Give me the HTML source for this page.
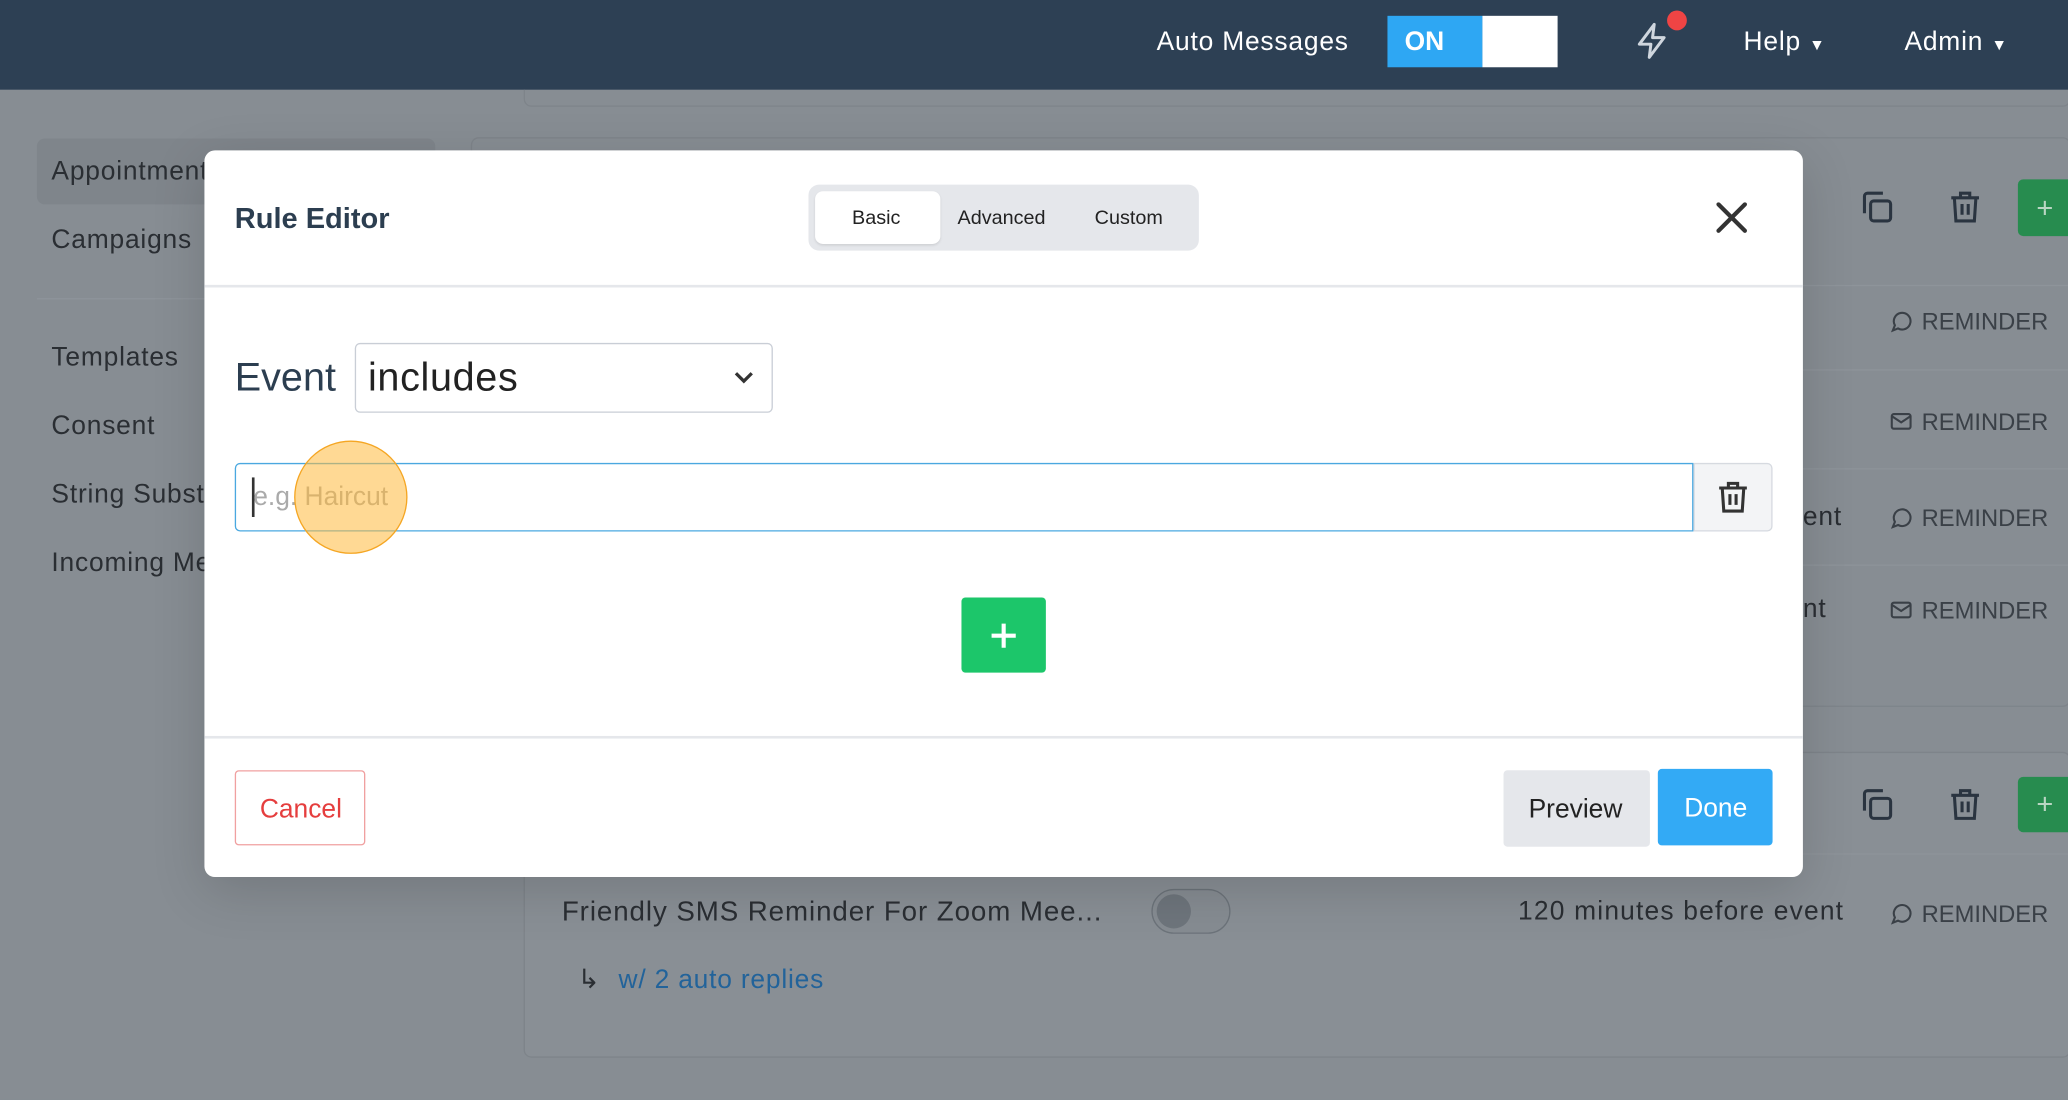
<!DOCTYPE html>
<html><head><meta charset="utf-8"><style>
html,body{margin:0;padding:0;width:2068px;height:1100px;overflow:hidden;background:#878d93;font-family:"Liberation Sans",sans-serif}
#w{position:absolute;left:0;top:0;width:1568px;height:834px;transform:scale(1.31888);transform-origin:0 0;background:#878d93}
.a{position:absolute;white-space:nowrap}
.t{letter-spacing:.6px}
.nav{left:0;top:0;width:1568px;height:68px;background:#2d4054}
.sb{font-size:20px;color:#2a2e33;left:39px;letter-spacing:.6px}
.rem{font-size:18px;color:#3a4047;left:1432px}
.rem svg{vertical-align:-3px;margin-right:6px}
.hl{background:#8e949a;height:1px}
</style></head><body><div id="w">
<div class="a nav"></div>
<div class="a t" style="left:877px;top:21px;font-size:20px;color:#fff">Auto Messages</div>
<div class="a" style="left:1052px;top:12px;width:72px;height:39px;background:#2ea7f3"></div>
<div class="a" style="left:1065px;top:21px;font-size:20px;font-weight:bold;color:#fff">ON</div>
<div class="a" style="left:1124px;top:12px;width:57px;height:39px;background:#fff"></div>
<svg class="a" style="left:1238px;top:16px" width="30" height="30" viewBox="0 0 24 24" fill="none" stroke="#cfd6de" stroke-width="1.8" stroke-linejoin="round"><path d="M13 2L4 14h7l-1 8 9-12h-7z"/></svg>
<div class="a" style="left:1264px;top:8px;width:15px;height:15px;border-radius:50%;background:#ef4444"></div>
<div class="a t" style="left:1322px;top:21px;font-size:20px;color:#fff">Help <span style="font-size:12px">▼</span></div>
<div class="a t" style="left:1444px;top:21px;font-size:20px;color:#fff">Admin <span style="font-size:12px">▼</span></div>

<div class="a" style="left:397px;top:68px;width:1171px;height:12px;border:1px solid #7e848a;border-top:none;border-radius:0 0 6px 6px"></div>
<div class="a" style="left:28px;top:105px;width:302px;height:50px;background:#7f858b;border-radius:6px"></div>
<div class="a sb" style="top:119px">Appointments</div>
<div class="a sb" style="top:171px">Campaigns</div>
<div class="a hl" style="left:28px;top:226px;width:130px"></div>
<div class="a sb" style="top:260px">Templates</div>
<div class="a sb" style="top:312px">Consent</div>
<div class="a sb" style="top:364px">String Substitutions</div>
<div class="a sb" style="top:416px">Incoming Messages</div>

<div class="a" style="left:357px;top:104px;width:1211px;height:430px;border:1px solid #7e848a;border-radius:6px"></div>
<div class="a hl" style="left:1367px;top:216px;width:201px"></div>
<div class="a hl" style="left:1367px;top:280px;width:201px"></div>
<div class="a hl" style="left:1367px;top:355px;width:201px"></div>
<div class="a hl" style="left:1367px;top:428px;width:201px"></div>
<div class="a" style="left:397px;top:570px;width:1171px;height:230px;border:1px solid #7e848a;border-radius:6px;background:#898f95"></div>
<div class="a hl" style="left:398px;top:647px;width:1170px"></div>

<svg class="a" style="left:1409px;top:143px" width="28" height="28" viewBox="0 0 24 24" fill="none" stroke="#2a3440" stroke-width="2"><rect x="8" y="8" width="13" height="13" rx="2"/><path d="M4 16V5a2 2 0 0 1 2-2h10"/></svg>
<svg class="a" style="left:1476px;top:143px" width="28" height="28" viewBox="0 0 24 24" fill="none" stroke="#2a3440" stroke-width="2"><path d="M3 6h18M9 6V3h6v3M5 6l1 15h12l1-15M10 10v7M14 10v7"/></svg>
<div class="a" style="left:1530px;top:136px;width:40px;height:43px;background:#278c4f;border-radius:4px 0 0 4px;color:#b9d6c3;font-size:22px;line-height:43px;padding-left:14px;box-sizing:border-box">+</div>
<svg class="a" style="left:1409px;top:596px" width="28" height="28" viewBox="0 0 24 24" fill="none" stroke="#2a3440" stroke-width="2"><rect x="8" y="8" width="13" height="13" rx="2"/><path d="M4 16V5a2 2 0 0 1 2-2h10"/></svg>
<svg class="a" style="left:1476px;top:596px" width="28" height="28" viewBox="0 0 24 24" fill="none" stroke="#2a3440" stroke-width="2"><path d="M3 6h18M9 6V3h6v3M5 6l1 15h12l1-15M10 10v7M14 10v7"/></svg>
<div class="a" style="left:1530px;top:589px;width:40px;height:42px;background:#278c4f;border-radius:4px 0 0 4px;color:#b9d6c3;font-size:22px;line-height:42px;padding-left:14px;box-sizing:border-box">+</div>

<div class="a rem" style="top:234px"><svg width="19" height="19" viewBox="0 0 24 24" fill="none" stroke="#3a4047" stroke-width="2"><path d="M4 21l2-5a8 8 0 1 1 3 3z"/></svg>REMINDER</div>
<div class="a rem" style="top:310px"><svg width="19" height="19" viewBox="0 0 24 24" fill="none" stroke="#3a4047" stroke-width="2"><rect x="3" y="5" width="18" height="14" rx="2"/><path d="M3 7l9 6 9-6"/></svg>REMINDER</div>
<div class="a rem" style="top:383px"><svg width="19" height="19" viewBox="0 0 24 24" fill="none" stroke="#3a4047" stroke-width="2"><path d="M4 21l2-5a8 8 0 1 1 3 3z"/></svg>REMINDER</div>
<div class="a rem" style="top:453px"><svg width="19" height="19" viewBox="0 0 24 24" fill="none" stroke="#3a4047" stroke-width="2"><rect x="3" y="5" width="18" height="14" rx="2"/><path d="M3 7l9 6 9-6"/></svg>REMINDER</div>
<div class="a rem" style="top:683px"><svg width="19" height="19" viewBox="0 0 24 24" fill="none" stroke="#3a4047" stroke-width="2"><path d="M4 21l2-5a8 8 0 1 1 3 3z"/></svg>REMINDER</div>
<div class="a t" style="left:1367px;top:381px;font-size:20px;color:#2a2e33">ent</div>
<div class="a t" style="left:1367px;top:451px;font-size:20px;color:#2a2e33">nt</div>

<div class="a" style="left:426px;top:680px;font-size:21px;letter-spacing:.7px;color:#2a2e33">Friendly SMS Reminder For Zoom Mee...</div>
<div class="a" style="left:873px;top:674px;width:60px;height:34px;border:1px solid #6c737a;border-radius:17px;box-sizing:border-box;background:#868c92"></div>
<div class="a" style="left:877px;top:678px;width:26px;height:26px;border-radius:50%;background:#6e757c"></div>
<div class="a" style="left:1151px;top:680px;font-size:20px;letter-spacing:.9px;color:#2a2e33">120 minutes before event</div>
<div class="a" style="left:438px;top:730px;font-size:20px;color:#2a2e33">↳</div>
<div class="a t" style="left:469px;top:732px;font-size:20px;color:#22639a">w/ 2 auto replies</div>

<!-- modal -->
<div class="a" style="left:155px;top:114px;width:1212px;height:551px;background:#fff;border-radius:8px;box-shadow:0 10px 40px rgba(0,0,0,.15)"></div>
<div class="a" style="left:178px;top:153px;font-size:22px;font-weight:bold;color:#2c3e50">Rule Editor</div>
<div class="a" style="left:613px;top:140px;width:296px;height:50px;background:#e5e7eb;border-radius:8px"></div>
<div class="a" style="left:618px;top:145px;width:95px;height:40px;background:#fff;border-radius:6px;box-shadow:0 1px 2px rgba(0,0,0,.1)"></div>
<div class="a" style="left:646px;top:157px;font-size:15px;color:#222">Basic</div>
<div class="a" style="left:726px;top:157px;font-size:15px;color:#222">Advanced</div>
<div class="a" style="left:830px;top:157px;font-size:15px;color:#222">Custom</div>
<svg class="a" style="left:1299px;top:151px" width="28" height="28" viewBox="0 0 28 28" stroke="#333" stroke-width="3.2" stroke-linecap="round"><path d="M4 4l20 20M24 4L4 24"/></svg>
<div class="a" style="left:155px;top:216px;width:1212px;height:2px;background:#e5e7eb"></div>

<div class="a" style="left:178px;top:270px;font-size:30px;color:#2c3e50">Event</div>
<div class="a" style="left:269px;top:260px;width:317px;height:53px;border:1px solid #c9ced6;border-radius:4px;box-sizing:border-box"></div>
<div class="a" style="left:279px;top:270px;font-size:30px;color:#222;letter-spacing:.5px">includes</div>
<svg class="a" style="left:556px;top:279px" width="16" height="14" viewBox="0 0 16 14" fill="none" stroke="#333" stroke-width="2.5"><path d="M2 4l6 6 6-6"/></svg>

<div class="a" style="left:178px;top:351px;width:1106px;height:52px;border:1.5px solid #4aa8e0;border-radius:4px 0 0 4px;box-sizing:border-box"></div>
<div class="a" style="left:191px;top:362px;width:1.5px;height:30px;background:#333"></div>
<div class="a" style="left:192px;top:366px;font-size:20px;color:#aaa">e.g. Haircut</div>
<div class="a" style="left:1284px;top:351px;width:60px;height:52px;background:#f3f4f6;border:1px solid #d6dae0;border-radius:0 4px 4px 0;box-sizing:border-box"></div>
<svg class="a" style="left:1300px;top:362px" width="28" height="30" viewBox="0 0 24 24" fill="none" stroke="#333" stroke-width="2"><path d="M3 6h18M9 6V3h6v3M5 6l1 15h12l1-15M10 10v7M14 10v7"/></svg>
<div class="a" style="left:223px;top:334px;width:86px;height:86px;border-radius:50%;background:rgba(255,186,60,.55);border:1.5px solid #f5a623;box-sizing:border-box"></div>

<div class="a" style="left:729px;top:453px;width:64px;height:57px;background:#1cc66a;border-radius:3px"></div>
<svg class="a" style="left:750px;top:471px" width="22" height="22" viewBox="0 0 24 24" stroke="#fff" stroke-width="3.4"><path d="M12 2v20M2 12h20"/></svg>
<div class="a" style="left:155px;top:558px;width:1212px;height:2px;background:#e5e7eb"></div>

<div class="a" style="left:178px;top:584px;width:99px;height:57px;border:1.5px solid #f0a0a0;border-radius:3px;box-sizing:border-box"></div>
<div class="a" style="left:197px;top:603px;font-size:20px;color:#e53e3e">Cancel</div>
<div class="a" style="left:1140px;top:584px;width:111px;height:58px;background:#e5e7eb;border-radius:3px"></div>
<div class="a" style="left:1159px;top:603px;font-size:20px;color:#222">Preview</div>
<div class="a" style="left:1257px;top:583px;width:87px;height:58px;background:#33aaf5;border-radius:3px"></div>
<div class="a" style="left:1277px;top:602px;font-size:20px;color:#fff">Done</div>
</div></body></html>
